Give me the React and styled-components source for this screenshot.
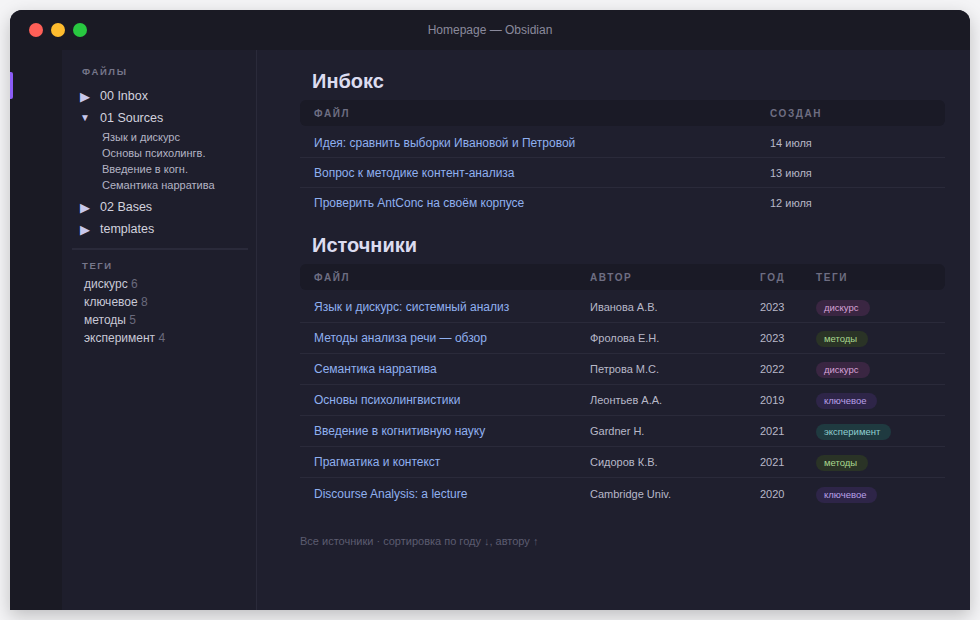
import styled, { createGlobalStyle } from 'styled-components'

const Global = createGlobalStyle`
  html, body { margin: 0; padding: 0; }
  body {
    background: #f4f4f6;
    font-family: "Liberation Sans", Arial, sans-serif;
  }
`

const Page = styled.div`
  padding: 10px;
  height: 620px;
  box-sizing: border-box;
`

const Window = styled.div`
  width: 960px;
  height: 600px;
  border-radius: 12px 12px 0 0;
  overflow: hidden;
  background: #1f1f2e;
  display: flex;
  flex-direction: column;
  box-shadow: 0 6px 18px rgba(0, 0, 0, 0.22);
`

const TitleBar = styled.div`
  height: 40px;
  flex: none;
  background: #1a1a24;
  display: flex;
  align-items: center;
  position: relative;
  padding-left: 19px;
  gap: 8px;
`

const Light = styled.span`
  width: 14px;
  height: 14px;
  border-radius: 50%;
  background: ${p => p.color};
`

const Title = styled.div`
  position: absolute;
  left: 0;
  right: 0;
  text-align: center;
  font-size: 12px;
  color: #8a8a9c;
  pointer-events: none;
`

const Body = styled.div`
  flex: 1;
  display: flex;
  min-height: 0;
`

const Ribbon = styled.div`
  width: 52px;
  flex: none;
  background: #1a1a24;
  padding-top: 22px;
`

const RibbonMark = styled.div`
  width: 3px;
  height: 27px;
  background: #8b5cf6;
  border-radius: 0 2px 2px 0;
`

const Sidebar = styled.div`
  width: 195px;
  flex: none;
  box-sizing: border-box;
  background: #1e1e2c;
  border-right: 1px solid #2a2a3a;
  padding: 16px 8px 0 10px;
`

const SectionLabel = styled.div`
  font-size: 9.5px;
  font-weight: 700;
  letter-spacing: 1.6px;
  color: #76768a;
  padding-left: 10px;
  margin-bottom: ${p => p.gap}px;
`

const Folder = styled.div`
  display: flex;
  align-items: center;
  height: 22px;
  padding-left: 8px;
  font-size: 12.5px;
  color: #d2d2de;
`

const Arrow = styled.span`
  width: 20px;
  font-size: ${p => (p.open ? '10px' : '13px')};
  line-height: 1;
  color: #c8c8ec;
`

const Children = styled.div`
  padding-bottom: 3px;
`

const Child = styled.div`
  font-size: 11px;
  color: #b4b4c4;
  height: 16px;
  line-height: 16px;
  padding-left: 30px;
`

const Divider = styled.div`
  height: 2px;
  background: #2a2a3a;
  margin: 8px 0 10px;
`

const TagLine = styled.div`
  font-size: 12px;
  color: #c8c8d6;
  height: 18px;
  line-height: 18px;
  padding-left: 12px;
  span { color: #6a6a7c; }
`

const Main = styled.div`
  flex: 1;
  padding: 18px 25px 0 43px;
`

const Heading = styled.h2`
  margin: 0 0 6px 12px;
  font-size: 20px;
  font-weight: 700;
  color: #dcdcf0;
  line-height: 26px;
`

const Table = styled.div`
  display: grid;
  grid-template-columns: ${p => p.cols};
  margin-bottom: ${p => p.after}px;
`

const HeadRow = styled.div`
  display: contents;
  > div {
    background: #1a1a26;
    height: 26px;
    display: flex;
    align-items: center;
    padding-left: 14px;
    font-size: 10px;
    font-weight: 700;
    letter-spacing: 1.6px;
    color: #6e6e82;
  }
  > div:first-child { border-radius: 6px 0 0 6px; }
  > div:last-child { border-radius: 0 6px 6px 0; }
`

const Row = styled.div`
  display: contents;
  > div {
    box-sizing: border-box;
    height: ${p => p.h}px;
    display: flex;
    align-items: center;
    padding-left: 14px;
    border-bottom: ${p => (p.last ? 'none' : '1px solid #2a2a3a')};
    font-size: 11px;
    color: #b8b8c8;
    margin-top: ${p => (p.first ? '2px' : '0')};
  }
`

const Link = styled.div`
  && { color: #8fb0f0; font-size: 12px; }
`

const Tag = styled.span`
  font-size: 9.5px;
  height: 16px;
  line-height: 16px;
  margin-top: 2px;
  padding: 0 11px 0 8px;
  border-radius: 8px;
  background: ${p => p.bg};
  color: ${p => p.fg};
`

const Footer = styled.div`
  font-size: 11px;
  color: #5c5c70;
`

const tagStyle = {
  'дискурс': { bg: '#3a2642', fg: '#d7a2d8' },
  'методы': { bg: '#2a3326', fg: '#a9d88f' },
  'ключевое': { bg: '#2e2548', fg: '#b9a0e8' },
  'эксперимент': { bg: '#1f3a40', fg: '#8fd0d0' },
}

const inbox = [
  ['Идея: сравнить выборки Ивановой и Петровой', '14 июля'],
  ['Вопрос к методике контент-анализа', '13 июля'],
  ['Проверить AntConc на своём корпусе', '12 июля'],
]

const sources = [
  ['Язык и дискурс: системный анализ', 'Иванова А.В.', '2023', 'дискурс'],
  ['Методы анализа речи — обзор', 'Фролова Е.Н.', '2023', 'методы'],
  ['Семантика нарратива', 'Петрова М.С.', '2022', 'дискурс'],
  ['Основы психолингвистики', 'Леонтьев А.А.', '2019', 'ключевое'],
  ['Введение в когнитивную науку', 'Gardner H.', '2021', 'эксперимент'],
  ['Прагматика и контекст', 'Сидоров К.В.', '2021', 'методы'],
  ['Discourse Analysis: a lecture', 'Cambridge Univ.', '2020', 'ключевое'],
]

const App = () => {
  return (
    <Page>
      <Global />
      <Window>
        <TitleBar>
          <Light color="#fe5f57" />
          <Light color="#febc2e" />
          <Light color="#28c840" />
          <Title>Homepage — Obsidian</Title>
        </TitleBar>
        <Body>
          <Ribbon>
            <RibbonMark />
          </Ribbon>
          <Sidebar>
            <SectionLabel gap={8}>ФАЙЛЫ</SectionLabel>
            <Folder><Arrow>▶</Arrow>00 Inbox</Folder>
            <Folder><Arrow open>▼</Arrow>01 Sources</Folder>
            <Children>
              <Child>Язык и дискурс</Child>
              <Child>Основы психолингв.</Child>
              <Child>Введение в когн.</Child>
              <Child>Семантика нарратива</Child>
            </Children>
            <Folder><Arrow>▶</Arrow>02 Bases</Folder>
            <Folder><Arrow>▶</Arrow>templates</Folder>
            <Divider />
            <SectionLabel gap={4}>ТЕГИ</SectionLabel>
            <TagLine>дискурс <span>6</span></TagLine>
            <TagLine>ключевое <span>8</span></TagLine>
            <TagLine>методы <span>5</span></TagLine>
            <TagLine>эксперимент <span>4</span></TagLine>
          </Sidebar>
          <Main>
            <Heading>Инбокс</Heading>
            <Table cols="456px 1fr" after={14}>
              <HeadRow><div>ФАЙЛ</div><div>СОЗДАН</div></HeadRow>
              {inbox.map(([f, d], i) => (
                <Row key={f} h={30} first={i === 0} last={i === inbox.length - 1}>
                  <Link>{f}</Link>
                  <div>{d}</div>
                </Row>
              ))}
            </Table>
            <Heading>Источники</Heading>
            <Table cols="276px 170px 56px 1fr" after={26}>
              <HeadRow><div>ФАЙЛ</div><div>АВТОР</div><div>ГОД</div><div>ТЕГИ</div></HeadRow>
              {sources.map(([f, a, y, t], i) => (
                <Row key={f} h={31} first={i === 0} last={i === sources.length - 1}>
                  <Link>{f}</Link>
                  <div>{a}</div>
                  <div>{y}</div>
                  <div><Tag bg={tagStyle[t].bg} fg={tagStyle[t].fg}>{t}</Tag></div>
                </Row>
              ))}
            </Table>
            <Footer>Все источники · сортировка по году ↓, автору ↑</Footer>
          </Main>
        </Body>
      </Window>
    </Page>
  )
}

export default App
